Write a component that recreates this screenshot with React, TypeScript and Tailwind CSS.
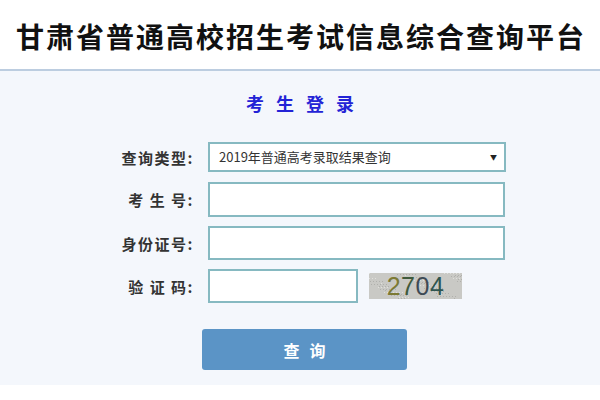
import React from "react";

const cjk = { fontFamily: '"Noto Sans CJK SC", "Noto Sans", sans-serif' };

function Captcha() {
  return (
    <div
      className="relative flex h-[26px] w-[93px] items-center justify-center bg-[#c9c9c5]"
      style={{ fontFamily: '"Liberation Sans", Arial, sans-serif' }}
    >
      <svg className="absolute inset-0" width="93" height="26">
        {Array.from({ length: 140 }).map((_, i) => {
          const x = (i * 37) % 93;
          const y = (i * 17 + (i % 7) * 5) % 26;
          return <rect key={i} x={x} y={y} width="1" height="1" fill={i % 3 ? "#b0b0ac" : "#e0e0dc"} />;
        })}
      </svg>
      <span className="relative text-[25px] leading-[26px] tracking-[0.5px]">
        <span className="text-[#7c7a34]">2</span>
        <span className="text-[#3f5a3c]">7</span>
        <span className="text-[#3d4a55]">0</span>
        <span className="text-[#2f5550]">4</span>
      </span>
    </div>
  );
}

export default function App() {
  const label = "w-[90px] pr-[3px] text-right text-[15px] font-bold text-[#333] leading-none tracking-[1.5px]";
  const input = "border-2 border-[#86b9c1] bg-white";
  return (
    <div className="h-[400px] w-[600px] bg-white" style={cjk}>
      <div className="flex h-[69px] items-center justify-center">
        <h1 className="pt-[3px] pl-[2px] text-[28px] font-bold leading-none tracking-[2px] text-[#111]">
          甘肃省普通高校招生考试信息综合查询平台
        </h1>
      </div>
      <div className="h-[316px] border-t-2 border-[#bccde0] bg-[#f4f7fc] pt-[20px]">
        <div className="pl-[12px] text-center text-[18px] font-bold leading-[24px] tracking-[12px] text-[#2323d6]">考生登录</div>
        <div className="mt-[27px] flex flex-col pl-[107px]">
          <div className="flex items-center gap-[11px]">
            <div className={label}>查询类型:</div>
            <div className={`${input} flex h-[30px] w-[298px] items-center justify-between pl-[9px] pr-[7px]`}>
              <span className="text-[13px] text-[#333]">2019年普通高考录取结果查询</span>
              <span className="text-[7px] text-[#222]">▼</span>
            </div>
          </div>
          <div className="mt-[10px] flex items-center gap-[11px]">
            <div className={label}>考 生 号:</div>
            <div className={`${input} h-[35px] w-[297px]`} />
          </div>
          <div className="mt-[9px] flex items-center gap-[11px]">
            <div className={label}>身份证号:</div>
            <div className={`${input} h-[34px] w-[297px]`} />
          </div>
          <div className="mt-[9px] flex items-center gap-[11px]">
            <div className={label}>验 证 码:</div>
            <div className={`${input} h-[34px] w-[150px]`} />
            <Captcha />
          </div>
          <div className="mt-[26px] ml-[95px] flex h-[41px] w-[205px] items-center justify-center rounded-[3px] bg-[#5b94c6] pl-[10px] text-[16px] font-bold tracking-[10px] text-white">
            查询
          </div>
        </div>
      </div>
    </div>
  );
}
